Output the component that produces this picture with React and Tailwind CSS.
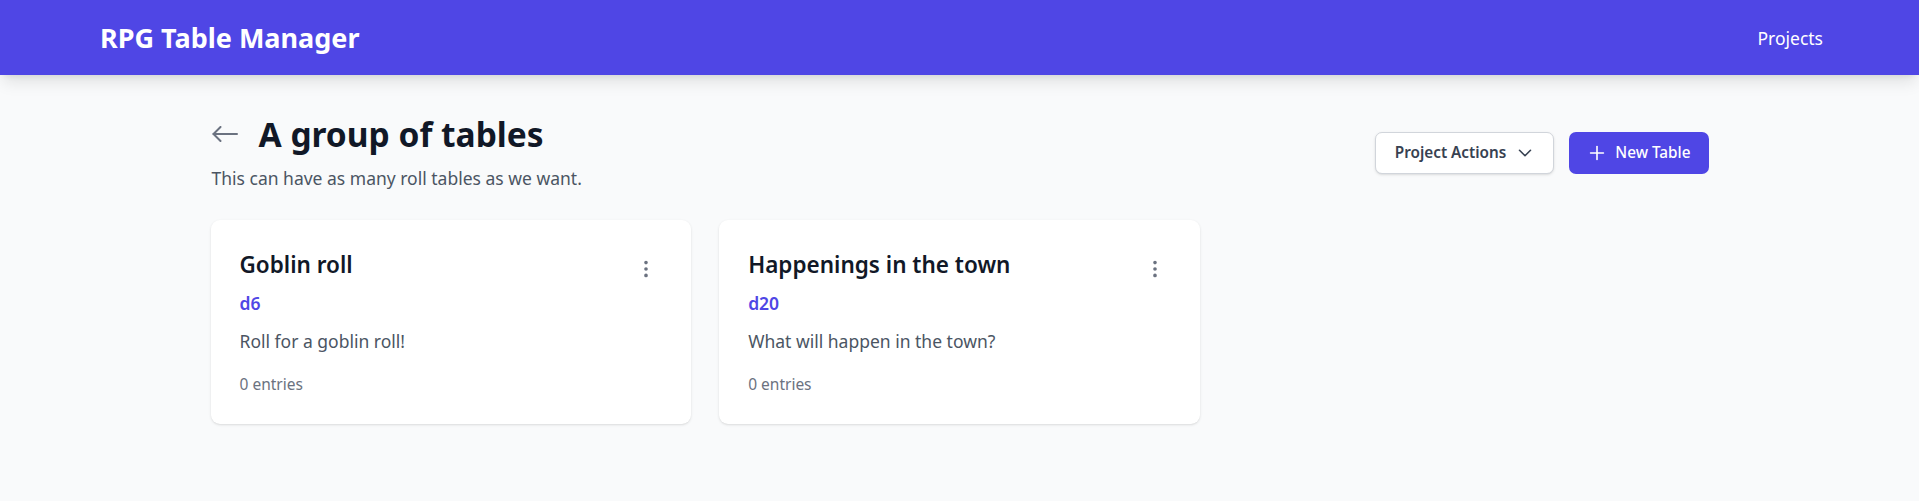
import { ChevronDown, Plus, EllipsisVertical } from "lucide-react";

const tables = [
  {
    id: 1,
    name: "Goblin roll",
    die: "d6",
    description: "Roll for a goblin roll!",
    entries: 0,
  },
  {
    id: 2,
    name: "Happenings in the town",
    die: "d20",
    description: "What will happen in the town?",
    entries: 0,
  },
];

function TableCard({ table }) {
  return (
    <div className="bg-white rounded-[9px] shadow p-7">
      <div className="flex items-start justify-between">
        <div>
          <h3 className="pl-px text-[22.5px] leading-[33px] font-semibold text-[#111827]">{table.name}</h3>
          <p className="mt-[8px] pl-px text-[17.5px] leading-[28px] font-semibold text-[#4f46e5]">{table.die}</p>
        </div>
        <button className="mt-1 p-1.5 text-[#6b7280]">
          <EllipsisVertical className="w-[22px] h-[22px]" />
        </button>
      </div>
      <p className="mt-[10px] pl-px text-[17.5px] leading-[28px] text-[#4b5563]">{table.description}</p>
      <p className="mt-[18px] pl-px text-[15.5px] leading-[23.4px] text-[#6b7280]">{table.entries} entries</p>
    </div>
  );
}

export default function App() {
  return (
    <div className="min-h-screen bg-[#f9fafb] font-['Noto_Sans',sans-serif]">
      <header className="bg-[#4f46e5] shadow-lg h-[75px] pl-[100px] pr-[96px] flex items-center justify-between">
        <h1 className="text-[27px] leading-[37px] font-bold text-white">RPG Table Manager</h1>
        <nav>
          <a href="#" className="text-white text-[17.5px] leading-[28px]">Projects</a>
        </nav>
      </header>

      <main className="max-w-[1498px] mx-auto pt-[38px]">
        <div className="flex items-center justify-between">
          <div className="pl-px">
            <div className="flex items-center gap-[21px]">
              <button className="text-[#6b7280]">
                <svg width="26" height="16" viewBox="0 0 26 16" fill="none" stroke="currentColor" strokeWidth="2" strokeLinecap="round" strokeLinejoin="round">
                  <path d="M25 8H1.5" />
                  <path d="M8.5 1 1.5 8l7 7" />
                </svg>
              </button>
              <h2 className="text-[33.5px] leading-[42px] font-bold text-[#111827]">A group of tables</h2>
            </div>
            <p className="mt-[9px] text-[17.5px] leading-[28px] text-[#4b5563]">This can have as many roll tables as we want.</p>
          </div>
          <div className="flex items-center gap-[15px]">
            <button className="h-[42px] pl-[19px] pr-[17px] flex items-center gap-2 bg-white border border-[#d1d5db] rounded-[7px] shadow-sm text-[15.3px] font-semibold text-[#374151]">
              Project Actions
              <ChevronDown className="w-[22px] h-[22px]" strokeWidth={1.75} />
            </button>
            <button className="h-[42px] pl-[17px] pr-[18px] flex items-center gap-[7px] bg-[#4f46e5] rounded-[7px] text-[15.3px] font-medium text-white">
              <Plus className="w-[22px] h-[22px]" strokeWidth={1.75} />
              New Table
            </button>
          </div>
        </div>

        <div className="mt-7 grid grid-cols-3 gap-7">
          {tables.map((table) => (
            <TableCard key={table.id} table={table} />
          ))}
        </div>
      </main>
    </div>
  );
}
